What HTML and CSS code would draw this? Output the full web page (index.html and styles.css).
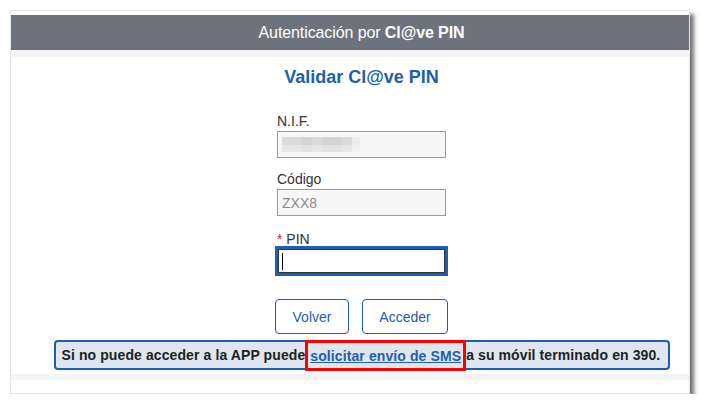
FILE: index.html
```html
<!DOCTYPE html>
<html lang="es">
<head>
<meta charset="utf-8">
<link rel="stylesheet" href="styles.css">
</head>
<body>
<div class="frame">
  <div class="header"><span>Autenticación por <b>Cl@ve PIN</b></span></div>
  <div class="strip"></div>
  <div class="content">
    <h1 class="title">Validar Cl@ve PIN</h1>
    <div class="form">
      <label class="label">N.I.F.</label>
      <div class="input disabled"><span class="blur"><i></i><i></i><i></i><i></i><i></i><i></i><i></i><i></i></span></div>
      <label class="label">Código</label>
      <div class="input disabled code"><span class="ph">ZXX8</span></div>
      <label class="label pin"><span class="req">*</span> PIN</label>
      <div class="input focus"><span class="caret"></span></div>
      <div class="buttons">
        <button class="btn back">Volver</button>
        <button class="btn go">Acceder</button>
      </div>
    </div>
    <div class="notice">Si no puede acceder a la APP puede <span class="hl"><a href="#">solicitar envío de SMS</a></span>a su móvil terminado en 390.</div>
  </div>
  <div class="strip bottom"></div>
  <div class="foot"></div>
</div>
</body>
</html>
```
FILE: styles.css
```css
* { box-sizing: border-box; }
html, body { margin: 0; padding: 0; background: #fff; }
body { font-family: "Liberation Sans", Arial, sans-serif; padding: 10px 11px 0 10px; }
.frame {
  width: 680px;
  height: 384px;
  background: #fff;
  border: 1px solid #e6e6e6;
  padding-top: 4px;
  box-shadow: 4px 4px 4px rgba(0,0,0,0.55);
  display: flex;
  flex-direction: column;
}
.header {
  height: 35px;
  background: #6c737c;
  color: #fff;
  font-size: 16px;
  text-align: center;
  line-height: 35px;
  padding-left: 23px;
  letter-spacing: -0.1px;
}
.header b { font-weight: bold; }
.strip { height: 7px; background: #f4f4f4; }
.content { flex: 1; display: flex; flex-direction: column; align-items: center; padding-left: 23px; }
.title {
  margin: 10px 0 0;
  font-size: 18px;
  font-weight: bold;
  color: #1c5fae;
  line-height: 20px;
}
.form { width: 173px; margin-top: 26px; display: flex; flex-direction: column; }
.label { font-size: 14px; color: #333; line-height: 16px; padding-left: 2px; margin-bottom: 2px; }
.label.pin { padding-top: 3px; margin-bottom: -1px; }
.req { color: #d9232d; }
.input {
  height: 27px;
  margin: 0 2px 13px 2px;
  border: 1px solid #9a9a9a;
  background: #f7f7f7;
  display: flex;
  align-items: center;
  padding-left: 4px;
}
.input.code { margin-bottom: 12px; }
.ph { color: #8a8a8a; font-size: 14px; }
.blur { display: flex; height: 15px; }
.blur i { width: 10px; height: 15px; background: linear-gradient(#dadada 50%, #e6e6e6 50%); }
.blur i:nth-child(3), .blur i:nth-child(5), .blur i:nth-child(6) { background: linear-gradient(#d3d3d3 50%, #e2e2e2 50%); }
.blur i:last-child { background: linear-gradient(#ececec 50%, #f0f0f0 50%); width: 8px; }
.input.focus {
  margin: 0 0 23px 0;
  height: 30px;
  border: 3px solid #1c5fae;
  background: #fff;
  box-shadow: inset 0 0 0 1px #333;
  padding-left: 4px;
}
.caret { width: 1px; height: 17px; background: #000; }
.buttons { display: flex; gap: 13px; }
.btn {
  font-family: "Liberation Sans", Arial, sans-serif;
  font-size: 14px;
  color: #1c5fae;
  background: #fff;
  border: 1px solid #1c5fae;
  border-radius: 4px;
  height: 35px;
  padding: 0;
}
.back { width: 74px; }
.go { width: 86px; }
.notice {
  margin-top: 6px;
  width: 616px;
  height: 30px;
  background: #dfe6ef;
  border: 2px solid #1c5fae;
  border-radius: 4px;
  font-size: 14px;
  font-weight: bold;
  color: #222;
  display: flex;
  align-items: center;
  padding-left: 6px;
  white-space: nowrap;
  letter-spacing: 0.1px;
}
.hl {
  border: 3px solid #f00;
  height: 31px;
  display: flex;
  align-items: center;
  padding: 0 2px 0 2px;
  margin-top: 1px;
}
.hl a { color: #1c5fae; text-decoration: underline; }
.bottom { height: 6px; }
.foot { height: 13px; }
```
